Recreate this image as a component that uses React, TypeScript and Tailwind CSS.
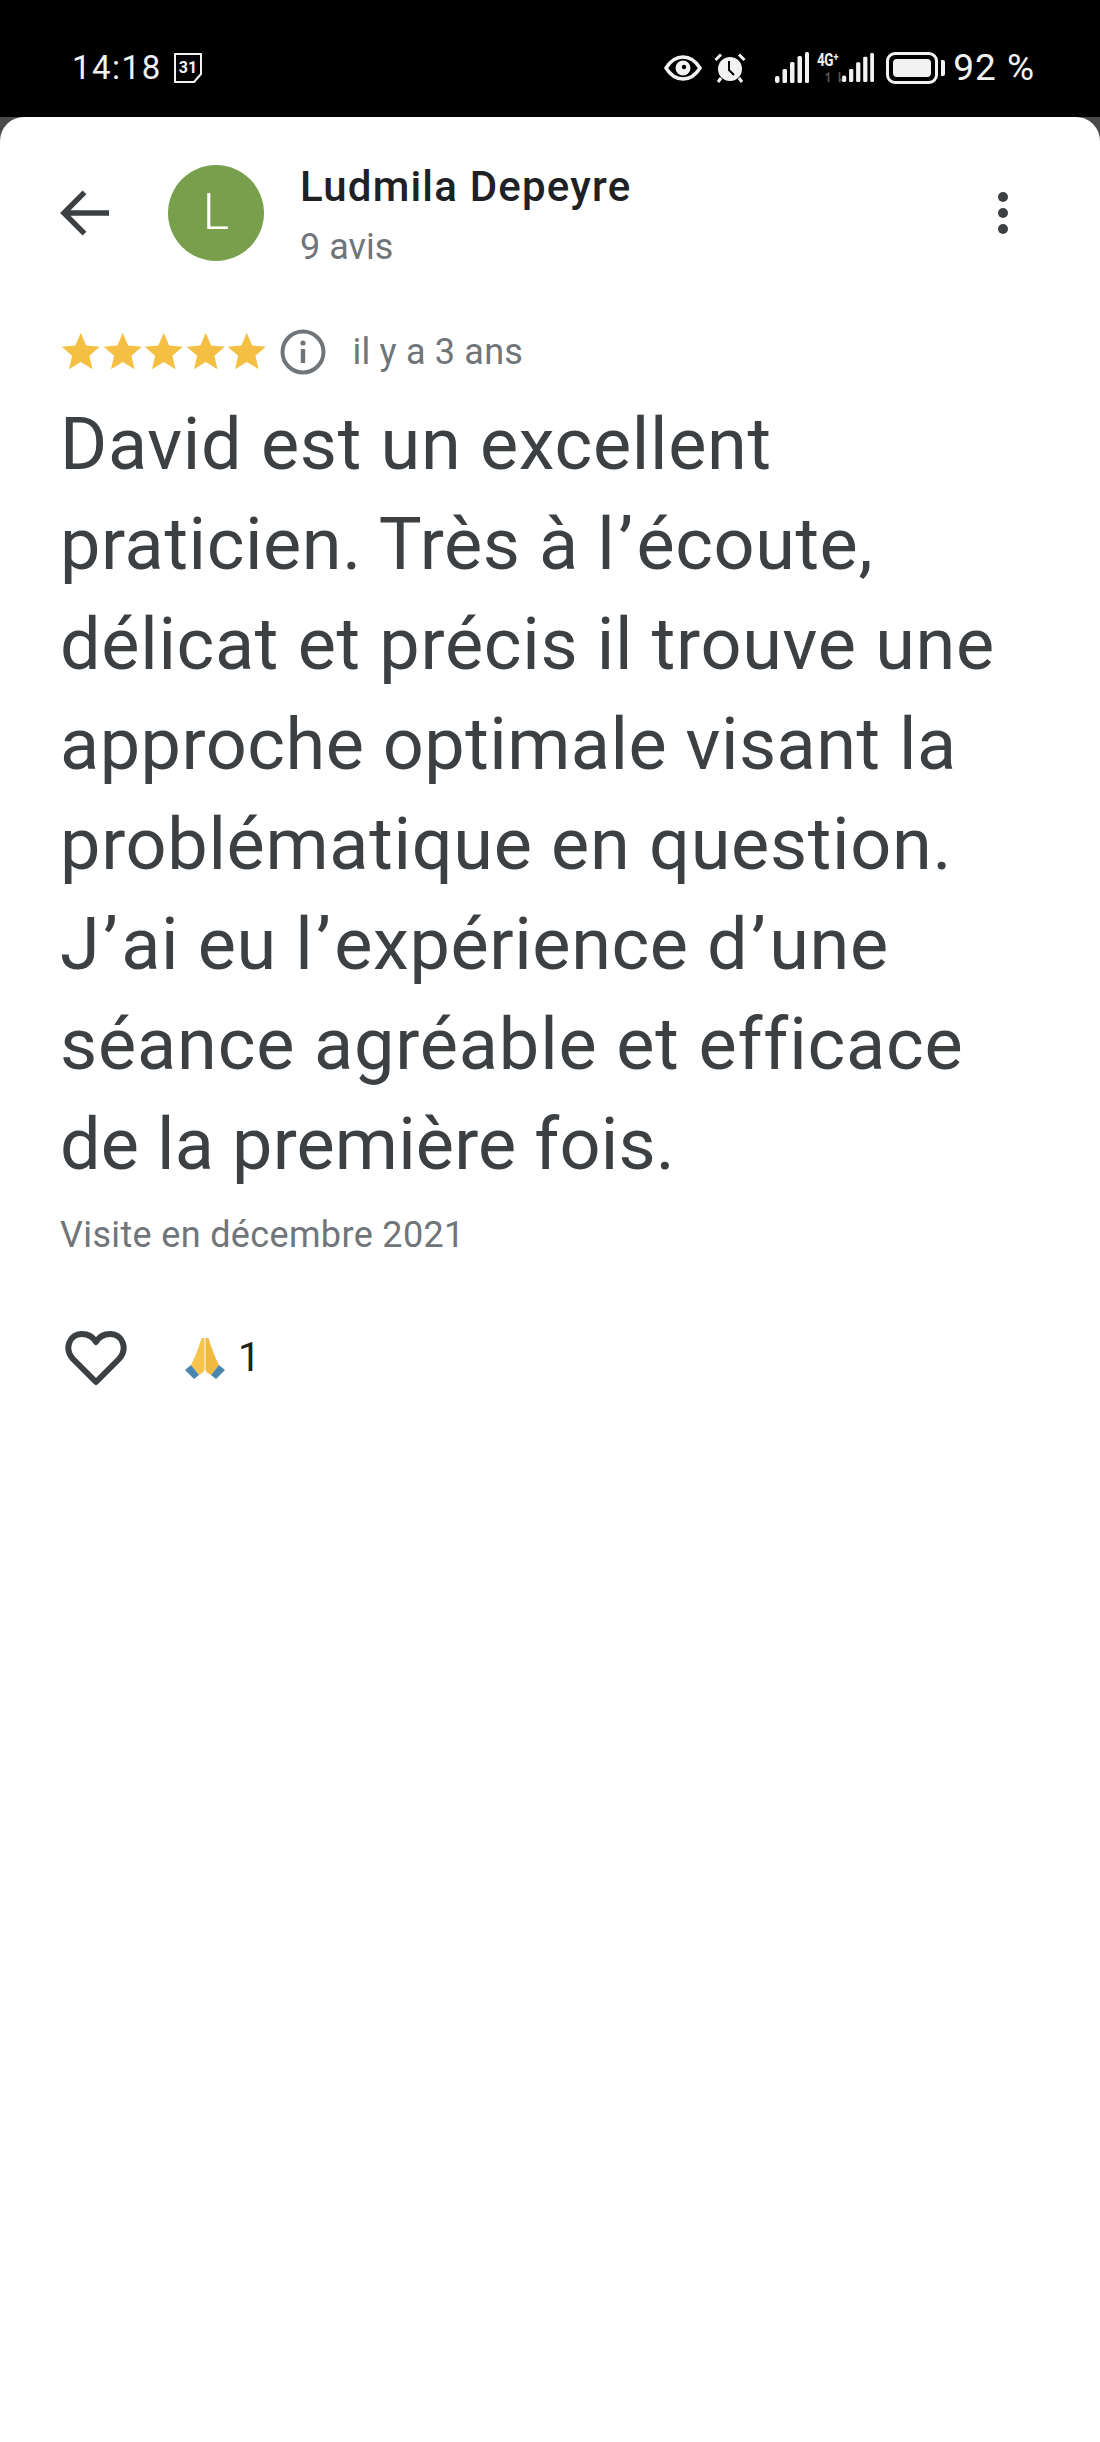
const body = [
  {text: "David est un excellent", tracking: "tracking-[0.7px]"},
  {text: "praticien. Très à l’écoute,", tracking: "tracking-[0.6px]"},
  {text: "délicat et précis il trouve une", tracking: "tracking-[0.7px]"},
  {text: "approche optimale visant la", tracking: "tracking-[0.5px]"},
  {text: "problématique en question.", tracking: "tracking-[0.7px]"},
  {text: "J’ai eu l’expérience d’une", tracking: "tracking-[0.6px]"},
  {text: "séance agréable et efficace", tracking: "tracking-[0.85px]"},
  {text: "de la première fois.", tracking: "tracking-[0.15px]"},
];

// the reference font has a wider apostrophe than Roboto
const Line = ({text}: {text: string}) => (
  <>
    {text.split("’").map((part, i) => (
      <span key={i}>
        {i > 0 && <span className="mx-[3px]">’</span>}
        {part}
      </span>
    ))}
  </>
);

const Bars = ({className}: {className?: string}) => (
  <svg viewBox="0 0 34 32" className={className} fill="#f2f2f2">
    <rect x="0" y="24" width="4.5" height="7" rx="2" />
    <rect x="7.5" y="17" width="4.5" height="14" rx="1.5" />
    <rect x="15" y="10" width="4.5" height="21" rx="1.5" />
    <rect x="22.5" y="4" width="4.5" height="27" rx="1.5" />
    <rect x="30" y="0" width="4" height="31" rx="1.5" />
  </svg>
);

const Star = () => (
  <svg viewBox="0 0 24 24" className="w-[41.5px] h-[42px]" fill="#f4bf42">
    <path d="M12 1.5l3.1 7.3 7.9.7-6 5.2 1.8 7.8L12 18.300l-6.800 4.200 1.800-7.800-6-5.200 7.900-.7z" />
  </svg>
);

const StatusBar = () => (
  <div className="h-[117px] flex items-center justify-between pl-[72px] pr-[65px] pt-[18px] text-[#f2f2f2]">
    <div className="flex items-center gap-[10px]">
      <span className="text-[33px] tracking-[1.5px] leading-none">14:18</span>
      <svg viewBox="0 0 32 32" className="w-[32px] h-[32px]" fill="none" stroke="#f2f2f2" strokeWidth="2">
        <path d="M3 2h26v20l-7 8H3z" strokeLinejoin="round" />
        <text x="16" y="21" fontSize="16" fontWeight="700" textAnchor="middle" fill="#f2f2f2" stroke="none">31</text>
      </svg>
    </div>
    <div className="flex items-center">
      <svg viewBox="0 0 38 26" className="w-[38px] h-[26px]">
        <path d="M2 13C7 5 13 2 19 2s12 3 17 11c-5 8-11 11-17 11S7 21 2 13z" fill="none" stroke="#f2f2f2" strokeWidth="3.500" />
        <circle cx="19" cy="13" r="7.500" fill="#f2f2f2" />
        <circle cx="20" cy="12" r="2.200" fill="#000" />
      </svg>
      <svg viewBox="0 0 32 32" className="w-[32px] h-[32px] ml-[12px]">
        <circle cx="16" cy="17" r="12" fill="#f2f2f2" />
        <path d="M1.500 8L7 2.500M30.500 8L25 2.500M7 26l-3 4M25 26l3 4" stroke="#f2f2f2" strokeWidth="3" />
        <path d="M15 9v9l5 5" stroke="#000" strokeWidth="2" fill="none" />
      </svg>
      <Bars className="w-[34px] h-[32px] ml-[29px]" />
      <div className="relative w-[30px] h-[32px] ml-[3px]">
        <span className="absolute left-[5px] -top-[1px] text-[18px] font-bold leading-none tracking-[-0.5px] scale-x-75 origin-left">4G⁺</span>
        <span className="absolute left-[11px] bottom-0 text-[13px] leading-none font-bold text-[#555]">↿⇂</span>
      </div>
      <Bars className="w-[32px] h-[32px]" />
      <div className="w-[52px] h-[32px] ml-[12px] rounded-[9px] border-[3px] border-[#f2f2f2] p-[4px]">
        <div className="h-full w-full rounded-[4px] bg-[#f2f2f2]" />
      </div>
      <div className="w-[4px] h-[16px] ml-[3px] rounded-r-[2px] bg-[#f2f2f2]" />
      <span className="ml-[8px] text-[37px] leading-none tracking-[1px]">92 %</span>
    </div>
  </div>
);

const Header = () => (
  <div className="h-[117px] flex items-center pl-[60px] pr-[60px] relative">
    <svg viewBox="0 0 50 46" className="w-[49px] h-[46px] shrink-0" fill="none" stroke="#3c4043" strokeWidth="5.500">
      <path d="M50 23H5M25 2L4 23l21 21" />
    </svg>
    <div className="ml-[59px] w-[96px] h-[96px] rounded-full bg-[#789f4b] flex items-center justify-center text-white text-[50px] font-light shrink-0">
      L
    </div>
    <div className="ml-[36px] grow mt-[6px]">
      <div className="text-[42px] leading-[50px] font-medium tracking-[1.2px] text-[#202124]">Ludmila Depeyre</div>
      <div className="text-[36px] leading-[44px] mt-[13px] text-[#70757a]">9 avis</div>
    </div>
    <svg viewBox="0 0 12 44" className="w-[12px] h-[44px] mr-[31px]" fill="#3c4043">
      <circle cx="6" cy="6" r="5" />
      <circle cx="6" cy="22" r="5" />
      <circle cx="6" cy="38" r="5" />
    </svg>
  </div>
);

const PrayingHands = () => (
  <svg viewBox="0 0 40 42" className="w-[40px] h-[42px]">
    <path d="M19.500 1l-3 0C14 10 10 20 6 28l8 10c2-1 5-3 5.500-5z" fill="#f6c44f" />
    <path d="M20.500 1l3 0C26 10 30 20 34 28l-8 10c-2-1-5-3-5.500-5z" fill="#f0b93f" />
    <path d="M0 33l6-5 8 10-5 4z" fill="#4a86ad" />
    <path d="M40 33l-6-5-8 10 5 4z" fill="#4a86ad" />
  </svg>
);

export default function App() {
  return (
    <div className="w-[1100px] h-[2442px] bg-black font-['Roboto','Liberation_Sans',sans-serif] overflow-hidden">
      <StatusBar />
      <div className="bg-[#4a4a4a]">
        <div className="h-[2325px] bg-white rounded-t-[24px]">
          <div className="pt-[37px]">
            <Header />
          </div>
          <div className="px-[60px]">
            <div className="flex items-center h-[50px] mt-[56px]">
              <div className="flex -mt-[2px]">
                <Star />
                <Star />
                <Star />
                <Star />
                <Star />
              </div>
              <svg viewBox="0 0 46 46" className="w-[46px] h-[46px] ml-[12px]" fill="none">
                <circle cx="23" cy="23" r="20.500" stroke="#70757a" strokeWidth="4" />
                <circle cx="23" cy="14" r="2.600" fill="#70757a" />
                <rect x="20.800" y="20" width="4.400" height="14" fill="#70757a" />
              </svg>
              <span className="ml-[27px] text-[36px] tracking-[0.2px] text-[#70757a]">il y a 3 ans</span>
            </div>
            <div className="mt-[18px] text-[72px] leading-[100px] text-[#3c4043]">
              {body.map((line) => (
                <div key={line.text} className={`whitespace-nowrap ${line.tracking}`}>
                  <Line text={line.text} />
                </div>
              ))}
            </div>
            <div className="mt-[18px] text-[36px] leading-[44px] tracking-[0.35px] text-[#70757a]">Visite en décembre 2021</div>
            <div className="flex items-center mt-[66px] h-[70px]">
              <svg viewBox="0 0 62 56" className="w-[62px] h-[56px] ml-[5px]" fill="none" stroke="#3c4043" strokeWidth="6" strokeLinejoin="round">
                <path d="M31 52L8 29C-1 19 4 4 17 4c6 0 11 3 14 8 3-5 8-8 14-8 13 0 18 15 9 25z" />
              </svg>
              <div className="ml-[58px]">
                <PrayingHands />
              </div>
              <span className="ml-[13px] text-[40px] text-[#202124]">1</span>
            </div>
          </div>
        </div>
      </div>
    </div>
  );
}
